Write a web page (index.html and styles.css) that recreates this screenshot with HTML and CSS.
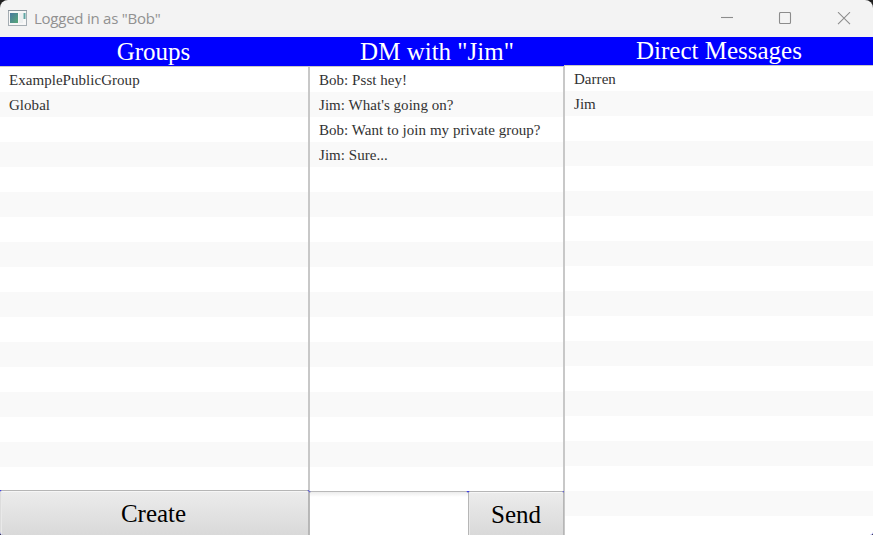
FILE: index.html
```html
<!DOCTYPE html>
<html lang="en">
<head>
<meta charset="utf-8">
<title>Logged in as "Bob"</title>
<link rel="stylesheet" href="styles.css">
</head>
<body>
<div class="window">
  <header class="titlebar">
    <svg class="app-icon" width="19" height="16" viewBox="0 0 19 16">
      <defs><linearGradient id="pane" x1="0" y1="0" x2="1" y2="1"><stop offset="0" stop-color="#4878a0"/><stop offset="1" stop-color="#58a878"/></linearGradient></defs>
      <rect x=".5" y=".5" width="18" height="15" fill="#f7f7f7" stroke="#a5adb3"/>
      <path d="M0 .5H19" stroke="#8b969e"/>
      <rect x="2" y="3" width="8" height="10" fill="url(#pane)"/>
      <rect x="11" y="3" width="4" height="10" fill="#eceff0"/>
      <rect x="15.5" y="3" width="2" height="6" fill="#61a5a4"/>
    </svg>
    <span class="title">Logged in as "Bob"</span>
    <svg class="controls" width="130" height="14" viewBox="0 0 130 14" fill="none" stroke="#8c8c8c" stroke-width="1.1">
      <path d="M0 5.5H12"/>
      <rect x="58.5" y=".5" width="11" height="11" rx="1"/>
      <path d="M117 .2L129 12.2M129 .2L117 12.2"/>
    </svg>
  </header>
  <main class="columns">
    <section class="column">
      <h2 class="heading groups-heading">Groups</h2>
      <ul class="list groups">
        <li>ExamplePublicGroup</li><li>Global</li><li></li><li></li><li></li><li></li><li></li><li></li><li></li><li></li><li></li><li></li><li></li><li></li><li></li><li></li><li></li>
      </ul>
      <div class="footer create-row"><button class="button create">Create</button></div>
    </section>
    <section class="column">
      <h2 class="heading dm-heading">DM with "Jim"</h2>
      <ul class="list messages">
        <li>Bob: Psst hey!</li><li>Jim: What's going on?</li><li>Bob: Want to join my private group?</li><li>Jim: Sure...</li><li></li><li></li><li></li><li></li><li></li><li></li><li></li><li></li><li></li><li></li><li></li><li></li><li></li>
      </ul>
      <div class="footer send-row"><input class="message" type="text" aria-label="Message"><button class="button send">Send</button></div>
    </section>
    <section class="column">
      <h2 class="heading direct-heading">Direct Messages</h2>
      <ul class="list contacts">
        <li>Darren</li><li>Jim</li><li></li><li></li><li></li><li></li><li></li><li></li><li></li><li></li><li></li><li></li><li></li><li></li><li></li><li></li><li></li><li></li><li></li>
      </ul>
    </section>
  </main>
</div>
</body>
</html>
```
FILE: styles.css
```css
* { box-sizing: border-box; }
html { background: #202020; }
body { margin: 0; overflow: hidden; }
.window {
  width: 873px;
  height: 535px;
  display: flex;
  flex-direction: column;
  border-radius: 8px 8px 3px 3px;
  overflow: hidden;
  background: #f3f3f3;
  font-family: "Liberation Serif", "Times New Roman", serif;
}
.titlebar {
  height: 37px;
  display: flex;
  align-items: center;
  padding: 0 23px 0 8px;
}
.app-icon { margin-bottom: 1px; }
.title {
  margin: 0 0 1px 7px;
  font: 15px/20px "Open Sans", "Noto Sans", sans-serif;
  letter-spacing: -.24px;
  color: #919191;
}
.controls { margin-left: auto; margin-right: -1px; }
.columns {
  height: 498px;
  display: grid;
  grid-template-columns: 309px 255px 309px;
  background: #00f;
}
.column { display: flex; flex-direction: column; min-width: 0; min-height: 0; }
.heading {
  margin: 0;
  height: 29px;
  font-size: 25px;
  line-height: 30px;
  font-weight: 400;
  text-align: center;
  color: #fff;
}
.groups-heading { padding-right: 2px; }
.dm-heading { padding-left: 1px; }
.direct-heading { height: 28px; line-height: 28px; padding-left: 1px; }
.list {
  flex: 1;
  min-height: 0;
  margin: 0;
  padding: 0;
  list-style: none;
  overflow: hidden;
  background: #fff;
  border: 0 solid #c8c8c8;
  border-top-width: 1px;
}
.groups { border-right-width: 1px; }
.messages { border-left-width: 1px; border-right-width: 1px; }
.contacts { border-left-width: 1px; }
.list li {
  height: 25.03px;
  padding-left: 9px;
  font-size: 15px;
  line-height: 26px;
  letter-spacing: .04px;
  color: #323232;
  white-space: nowrap;
}
.list li:nth-child(even) { background: #f9f9f9; }
.footer { display: flex; }
.create-row { height: 45px; }
.send-row { height: 44px; }
.button {
  margin: 0;
  padding: 0;
  border: 1px solid #b6b6b6;
  border-bottom: 0;
  border-radius: 2px 2px 0 0;
  background: linear-gradient(#ececec, #d9d9d9);
  box-shadow: inset 0 1px #f6f6f6, inset 1px 0 #e9e9e9;
  font: 25px/46px "Liberation Serif", "Times New Roman", serif;
  color: #000;
}
.create { width: 309px; padding-right: 2px; border-left-color: #dcdcdc; }
.send { width: 96px; }
.message {
  width: 159px;
  padding: 0 8px;
  border: 1px solid #b9b9b9;
  border-bottom: 0;
  border-right: 0;
  border-radius: 2px 2px 0 0;
  background: linear-gradient(#ececec, #fff 5px);
  font: 25px "Liberation Serif", serif;
}
```
